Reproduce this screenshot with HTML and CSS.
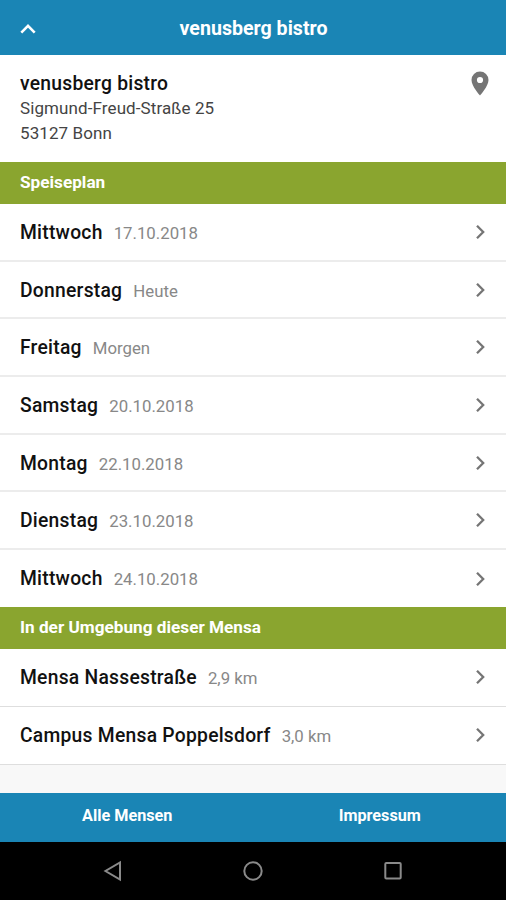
FILE: index.html
```html
<!DOCTYPE html>
<html lang="de">
<head>
  <meta charset="UTF-8" />
  <meta name="viewport" content="width=device-width, initial-scale=1.0"/>
  <title>venusberg bistro</title>

  <link rel="stylesheet" href="styles.css">
</head>
<body>

  <svg class="defs" width="0" height="0">
    <symbol id="chevron" viewBox="0 0 12 16">
      <path d="M2 1.7 8.2 8 2 14.3" fill="none" stroke="currentColor" stroke-width="2.3"/>
    </symbol>
  </svg>

  <header class="topbar">
    <svg class="up" width="16" height="12" viewBox="0 0 16 12"><path d="M1.3 9.6 8 2.9l6.7 6.7" fill="none" stroke="#fff" stroke-width="2.6"/></svg>
    <h1>venusberg bistro</h1>
  </header>

  <main>
    <section class="address">
      <div>
        <h2>venusberg bistro</h2>
        <p>Sigmund-Freud-Straße 25<br>53127 Bonn</p>
      </div>
      <svg class="pin" width="18" height="25" viewBox="0 0 18 25"><path fill="#757575" fill-rule="evenodd" d="M9 .5A8.5 8.5 0 0 0 .5 9C.5 15.3 9 24.5 9 24.5S17.5 15.3 17.5 9A8.5 8.5 0 0 0 9 .5Zm0 5.4a3.1 3.1 0 1 1 0 6.2 3.1 3.1 0 0 1 0-6.2Z"/></svg>
    </section>

    <h3 class="divider">Speiseplan</h3>
    <ul class="list">
      <li><b>Mittwoch</b><span>17.10.2018</span><svg><use href="#chevron"/></svg></li>
      <li><b>Donnerstag</b><span>Heute</span><svg><use href="#chevron"/></svg></li>
      <li><b>Freitag</b><span>Morgen</span><svg><use href="#chevron"/></svg></li>
      <li><b>Samstag</b><span>20.10.2018</span><svg><use href="#chevron"/></svg></li>
      <li><b>Montag</b><span>22.10.2018</span><svg><use href="#chevron"/></svg></li>
      <li><b>Dienstag</b><span>23.10.2018</span><svg><use href="#chevron"/></svg></li>
      <li><b>Mittwoch</b><span>24.10.2018</span><svg><use href="#chevron"/></svg></li>
    </ul>

    <h3 class="divider">In der Umgebung dieser Mensa</h3>
    <ul class="list nearby">
      <li><b>Mensa Nassestraße</b><span>2,9 km</span><svg><use href="#chevron"/></svg></li>
      <li><b>Campus Mensa Poppelsdorf</b><span>3,0 km</span><svg><use href="#chevron"/></svg></li>
    </ul>
  </main>

  <footer class="tabs">
    <a>Alle Mensen</a>
    <a>Impressum</a>
  </footer>

  <nav class="system">
    <svg width="20" height="22" viewBox="0 0 20 22"><path d="M17 2.5v17L2.5 11Z"/></svg>
    <svg width="20" height="22" viewBox="0 0 20 22"><circle cx="10" cy="11" r="8.7"/></svg>
    <svg width="20" height="22" viewBox="0 0 20 22"><rect x="2.3" y="3" width="15.4" height="15.6" rx="1"/></svg>
  </nav>

</body>
</html>
```

FILE: styles.css
```css
* {
  box-sizing: border-box;
}

body {
  margin: 0;
  height: 900px;
  display: flex;
  flex-direction: column;
  font-family: Roboto, sans-serif;
  background: #f8f8f8;
  color: #111;
  overflow: hidden;
}

h1, h2, h3, p, ul {
  margin: 0;
  padding: 0;
}

.defs {
  position: absolute;
}

.topbar {
  height: 55px;
  display: grid;
  grid-template-columns: 36px 1fr 36px;
  align-items: center;
  padding: 2px 0 0 1px;
  background: #1a85b5;
  color: #fff;
}

.topbar h1 {
  text-align: center;
  font-size: 19.6px;
  font-weight: 700;
}

.up {
  justify-self: end;
  margin-right: 1px;
}

.address {
  height: 107px;
  display: flex;
  justify-content: space-between;
  padding: 16px 17px 0 20px;
  background: #fff;
}

.address h2 {
  padding-top: 1px;
  font-size: 19.3px;
  font-weight: 500;
  line-height: 24px;
  letter-spacing: 0.25px;
}

.address p {
  font-size: 17px;
  line-height: 25px;
  letter-spacing: 0.1px;
  color: #444;
}

.divider {
  height: 42px;
  padding: 0 20px;
  line-height: 40px;
  font-size: 17.2px;
  font-weight: 700;
  background: #8aa52f;
  color: #fff;
}

.list {
  list-style: none;
  background: #fff;
}

.list li {
  height: 57.7px;
  display: flex;
  align-items: baseline;
  padding: 0 19px 0 20px;
  line-height: 57px;
  border-bottom: 2px solid #ececec;
}

.list li:last-child {
  height: 56.8px;
  border-bottom: 0;
}

.nearby li,
.nearby li:last-child {
  height: 58px;
  border-bottom: 1px solid #dedede;
}

.list b {
  font-size: 19.3px;
  font-weight: 500;
  letter-spacing: 0.25px;
}

.list span {
  margin-left: 11px;
  font-size: 16.8px;
  color: #888;
}

.list svg {
  width: 12px;
  height: 16px;
  margin-left: auto;
  align-self: center;
  color: #757575;
}

.tabs {
  height: 49px;
  margin-top: auto;
  display: grid;
  grid-template-columns: 1fr 1fr;
  padding-left: 1px;
  text-align: center;
  line-height: 46px;
  font-size: 16.2px;
  font-weight: 700;
  background: #1a85b5;
  color: #fff;
}

.system {
  height: 58px;
  display: flex;
  justify-content: center;
  align-items: center;
  gap: 120px;
  background: #000;
}

.system svg {
  fill: none;
  stroke: #8a8a8a;
  stroke-width: 2;
}
```
